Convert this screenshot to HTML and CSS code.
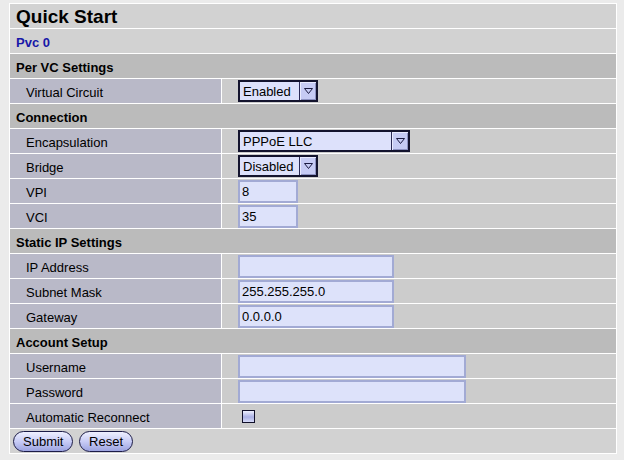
FILE: index.html
```html
<!DOCTYPE html>
<html lang="en">
<head>
    <meta charset="UTF-8">
    <title>Quick Start</title>
    <link rel="stylesheet" href="styles.css">
</head>
<body>

<table class="setup">
    <colgroup>
        <col class="col-label">
        <col class="col-value">
    </colgroup>
    <tr><td colspan="2" class="title">Quick Start</td></tr>
    <tr><td colspan="2" class="pvc">Pvc 0</td></tr>

    <tr><td colspan="2" class="section">Per VC Settings</td></tr>
    <tr>
        <td class="label">Virtual Circuit</td>
        <td class="value"><span class="select w-short"><span class="sel-text">Enabled</span><span class="sel-arrow"><svg width="9" height="6" viewBox="0 0 9 6"><path d="M0.5 0.5 H8.5 L4.5 5.5 Z" fill="none" stroke="#1a1a40"/></svg></span></span></td>
    </tr>

    <tr><td colspan="2" class="section">Connection</td></tr>
    <tr>
        <td class="label">Encapsulation</td>
        <td class="value"><span class="select w-long"><span class="sel-text">PPPoE LLC</span><span class="sel-arrow"><svg width="9" height="6" viewBox="0 0 9 6"><path d="M0.5 0.5 H8.5 L4.5 5.5 Z" fill="none" stroke="#1a1a40"/></svg></span></span></td>
    </tr>
    <tr>
        <td class="label">Bridge</td>
        <td class="value"><span class="select w-short"><span class="sel-text">Disabled</span><span class="sel-arrow"><svg width="9" height="6" viewBox="0 0 9 6"><path d="M0.5 0.5 H8.5 L4.5 5.5 Z" fill="none" stroke="#1a1a40"/></svg></span></span></td>
    </tr>
    <tr>
        <td class="label">VPI</td>
        <td class="value"><input type="text" class="field w-s" value="8"></td>
    </tr>
    <tr>
        <td class="label">VCI</td>
        <td class="value"><input type="text" class="field w-s" value="35"></td>
    </tr>

    <tr><td colspan="2" class="section">Static IP Settings</td></tr>
    <tr>
        <td class="label">IP Address</td>
        <td class="value"><input type="text" class="field w-m" value=""></td>
    </tr>
    <tr>
        <td class="label">Subnet Mask</td>
        <td class="value"><input type="text" class="field w-m" value="255.255.255.0"></td>
    </tr>
    <tr>
        <td class="label">Gateway</td>
        <td class="value"><input type="text" class="field w-m" value="0.0.0.0"></td>
    </tr>

    <tr><td colspan="2" class="section">Account Setup</td></tr>
    <tr>
        <td class="label">Username</td>
        <td class="value"><input type="text" class="field w-l" value=""></td>
    </tr>
    <tr>
        <td class="label">Password</td>
        <td class="value"><input type="password" class="field w-l" value=""></td>
    </tr>
    <tr>
        <td class="label">Automatic Reconnect</td>
        <td class="value"><span class="check"></span></td>
    </tr>

    <tr>
        <td colspan="2" class="buttons">
            <button class="pill">Submit</button>
            <button class="pill">Reset</button>
        </td>
    </tr>
</table>

</body>
</html>
```

FILE: styles.css
```css
body {
    margin: 3px 0 0 9px;
    background-color: #ebebeb;
    font-family: "Liberation Sans", Arial, sans-serif;
    font-size: 13px;
    color: #000;
}

.setup {
    width: 608px;
    border-collapse: separate;
    border-spacing: 1px;
    background-color: #fff;
    table-layout: fixed;
}

.col-label { width: 211px; }
.col-value { width: 394px; }

.setup tr {
    height: 24px;
}

.setup td {
    height: 24px;
    padding: 0;
    box-sizing: border-box;
    vertical-align: middle;
}

.title {
    background-color: #d2d2d2;
    font-size: 19px;
    font-weight: bold;
    padding: 1px 0 0 6px !important;
}

.pvc {
    background-color: #d2d2d2;
    color: #1818a8;
    font-weight: bold;
    padding: 2px 0 0 6px !important;
}

.section {
    background-color: #bbbbbb;
    font-weight: bold;
    padding: 2px 0 0 6px !important;
}

.label {
    background-color: #b9b9c8;
    padding: 2px 0 0 16px !important;
}

.value {
    background-color: #cccccc;
    padding-left: 16px !important;
}

.buttons {
    background-color: #d2d2d2;
    padding-left: 3px !important;
}

/* drop-down boxes */
.select {
    display: flex;
    box-sizing: border-box;
    height: 22px;
    border: 2px solid #14142e;
    background-color: #dde1fb;
}

.w-short { width: 80px; }
.w-long { width: 172px; }

.sel-text {
    flex: 1;
    padding: 1px 0 0 3px;
    line-height: 17px;
    white-space: nowrap;
}

.sel-arrow {
    width: 16px;
    display: flex;
    align-items: center;
    justify-content: center;
    background-color: #c6cbf4;
    border-left: 1px solid #2a2a55;
    box-shadow: inset 1px 1px 0 #e8eaff, inset -1px -1px 0 #8d92c2;
}

/* text fields */
.field {
    display: block;
    box-sizing: border-box;
    height: 23px;
    margin: 0;
    padding: 1px 2px 0;
    border: 2px solid #a2aad4;
    background-color: #dde2fa;
    font-family: "Liberation Sans", Arial, sans-serif;
    font-size: 13px;
    color: #000;
}

.w-s { width: 60px; }
.w-m { width: 156px; }
.w-l { width: 228px; }

.check {
    display: block;
    width: 13px;
    height: 13px;
    margin-left: 4px;
    box-sizing: border-box;
    border: 1px solid #10102a;
    background: linear-gradient(#eef0ff, #aab0e4 55%, #d6daf8);
}

.pill {
    height: 21px;
    padding: 0 9px;
    margin-right: 2px;
    border: 1px solid #1c1c48;
    border-radius: 11px;
    background: linear-gradient(#eef0ff, #c8ccf6 50%, #9ca3e0);
    font-family: "Liberation Sans", Arial, sans-serif;
    font-size: 13px;
    color: #000;
}
```
